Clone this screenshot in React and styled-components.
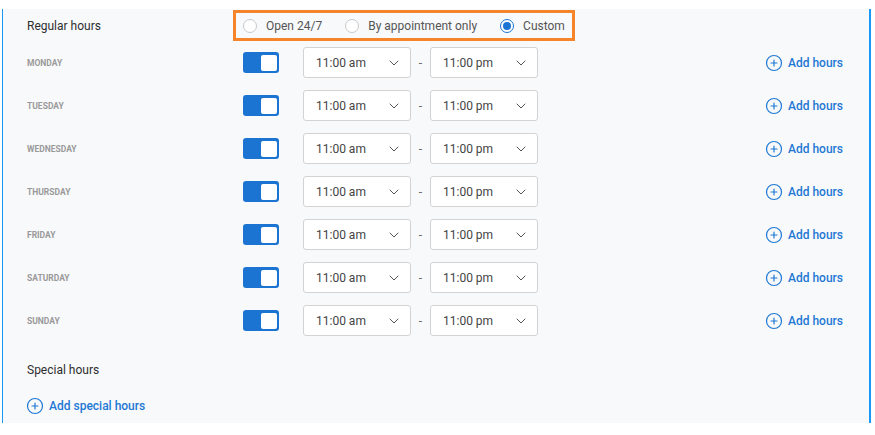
import React from "react";
import styled, { createGlobalStyle } from "styled-components";
import { ChevronDown, CirclePlus } from "lucide-react";

const GlobalStyle = createGlobalStyle`
  body {
    margin: 0;
    background: #ffffff;
    font-family: Roboto, "Liberation Sans", Arial, sans-serif;
  }
`;

const days = ["Monday", "Tuesday", "Wednesday", "Thursday", "Friday", "Saturday", "Sunday"];

const Panel = styled.div`
  margin: 9px 0 0 2px;
  width: 869px;
  height: 414px;
  box-sizing: border-box;
  background: #f8f9fb;
  border-left: 1px solid #1a98f7;
  border-right: 2px solid #1a98f7;
  padding: 1px 26px 0 24px;
`;

const Header = styled.div`
  display: flex;
  align-items: center;
  height: 31px;
`;

const Title = styled.div`
  width: 206px;
  font-size: 12px;
  font-weight: 400;
  color: #2e2e2e;
`;

const RadioBox = styled.div`
  display: flex;
  align-items: center;
  height: 31px;
  box-sizing: border-box;
  border: 3px solid #f5842a;
  padding: 0 7px 0 7px;
  gap: 23px;
`;

const RadioItem = styled.label`
  display: flex;
  align-items: center;
  gap: 9px;
  font-size: 12px;
  color: #555;
`;

const RadioCircle = styled.span`
  width: 14px;
  height: 14px;
  box-sizing: border-box;
  border-radius: 50%;
  border: 1px solid ${({ $checked }) => ($checked ? "#1b74d2" : "#c8c8c8")};
  background: #fff;
  display: flex;
  align-items: center;
  justify-content: center;
  &::after {
    content: "";
    display: ${({ $checked }) => ($checked ? "block" : "none")};
    width: 8px;
    height: 8px;
    border-radius: 50%;
    background: #1b74d2;
  }
`;

const Rows = styled.div`
  display: flex;
  flex-direction: column;
  gap: 12px;
  margin-top: 6px;
`;

const Row = styled.div`
  display: flex;
  align-items: center;
  height: 31px;
`;

const DayLabel = styled.div`
  width: 216px;
  font-size: 8.5px;
  font-weight: 700;
  color: #9a9a9a;
  text-transform: uppercase;
`;

const Toggle = styled.div`
  width: 36px;
  height: 21px;
  border-radius: 3px;
  background: #1b74d2;
  display: flex;
  align-items: center;
  justify-content: flex-end;
  padding-right: 2px;
  box-sizing: border-box;
  margin-right: 24px;
  &::after {
    content: "";
    width: 16px;
    height: 16px;
    border-radius: 2px;
    background: #fff;
  }
`;

const Select = styled.div`
  width: 108px;
  height: 31px;
  box-sizing: border-box;
  border: 1px solid #d3d3d3;
  border-radius: 3px;
  background: #fff;
  display: flex;
  align-items: center;
  justify-content: space-between;
  padding: 0 8px 0 12px;
  font-size: 12px;
  color: #444;
  svg {
    color: #555;
  }
`;

const Dash = styled.div`
  width: 19px;
  text-align: center;
  font-size: 12px;
  color: #666;
`;

const AddLink = styled.div`
  display: flex;
  align-items: center;
  gap: 5px;
  font-size: 12px;
  font-weight: 500;
  color: #1e78d4;
  margin-left: ${({ $right }) => ($right ? "auto" : "0")};
`;

const SectionTitle = styled(Title)`
  margin-top: 27px;
`;

const SpecialAdd = styled.div`
  margin-top: 20px;
  margin-left: -1px;
`;

const options = [
  { label: "Open 24/7", checked: false },
  { label: "By appointment only", checked: false },
  { label: "Custom", checked: true },
];

export default function App() {
  return (
    <>
      <GlobalStyle />
      <Panel>
        <Header>
          <Title>Regular hours</Title>
          <RadioBox>
            {options.map((o) => (
              <RadioItem key={o.label}>
                <RadioCircle $checked={o.checked} />
                {o.label}
              </RadioItem>
            ))}
          </RadioBox>
        </Header>
        <Rows>
          {days.map((d) => (
            <Row key={d}>
              <DayLabel>{d}</DayLabel>
              <Toggle />
              <Select>
                11:00 am
                <ChevronDown size={16} strokeWidth={1.5} />
              </Select>
              <Dash>-</Dash>
              <Select>
                11:00 pm
                <ChevronDown size={16} strokeWidth={1.5} />
              </Select>
              <AddLink $right>
                <CirclePlus size={18} strokeWidth={1.6} />
                Add hours
              </AddLink>
            </Row>
          ))}
        </Rows>
        <SectionTitle>Special hours</SectionTitle>
        <SpecialAdd>
          <AddLink>
            <CirclePlus size={18} strokeWidth={1.6} />
            Add special hours
          </AddLink>
        </SpecialAdd>
      </Panel>
    </>
  );
}
